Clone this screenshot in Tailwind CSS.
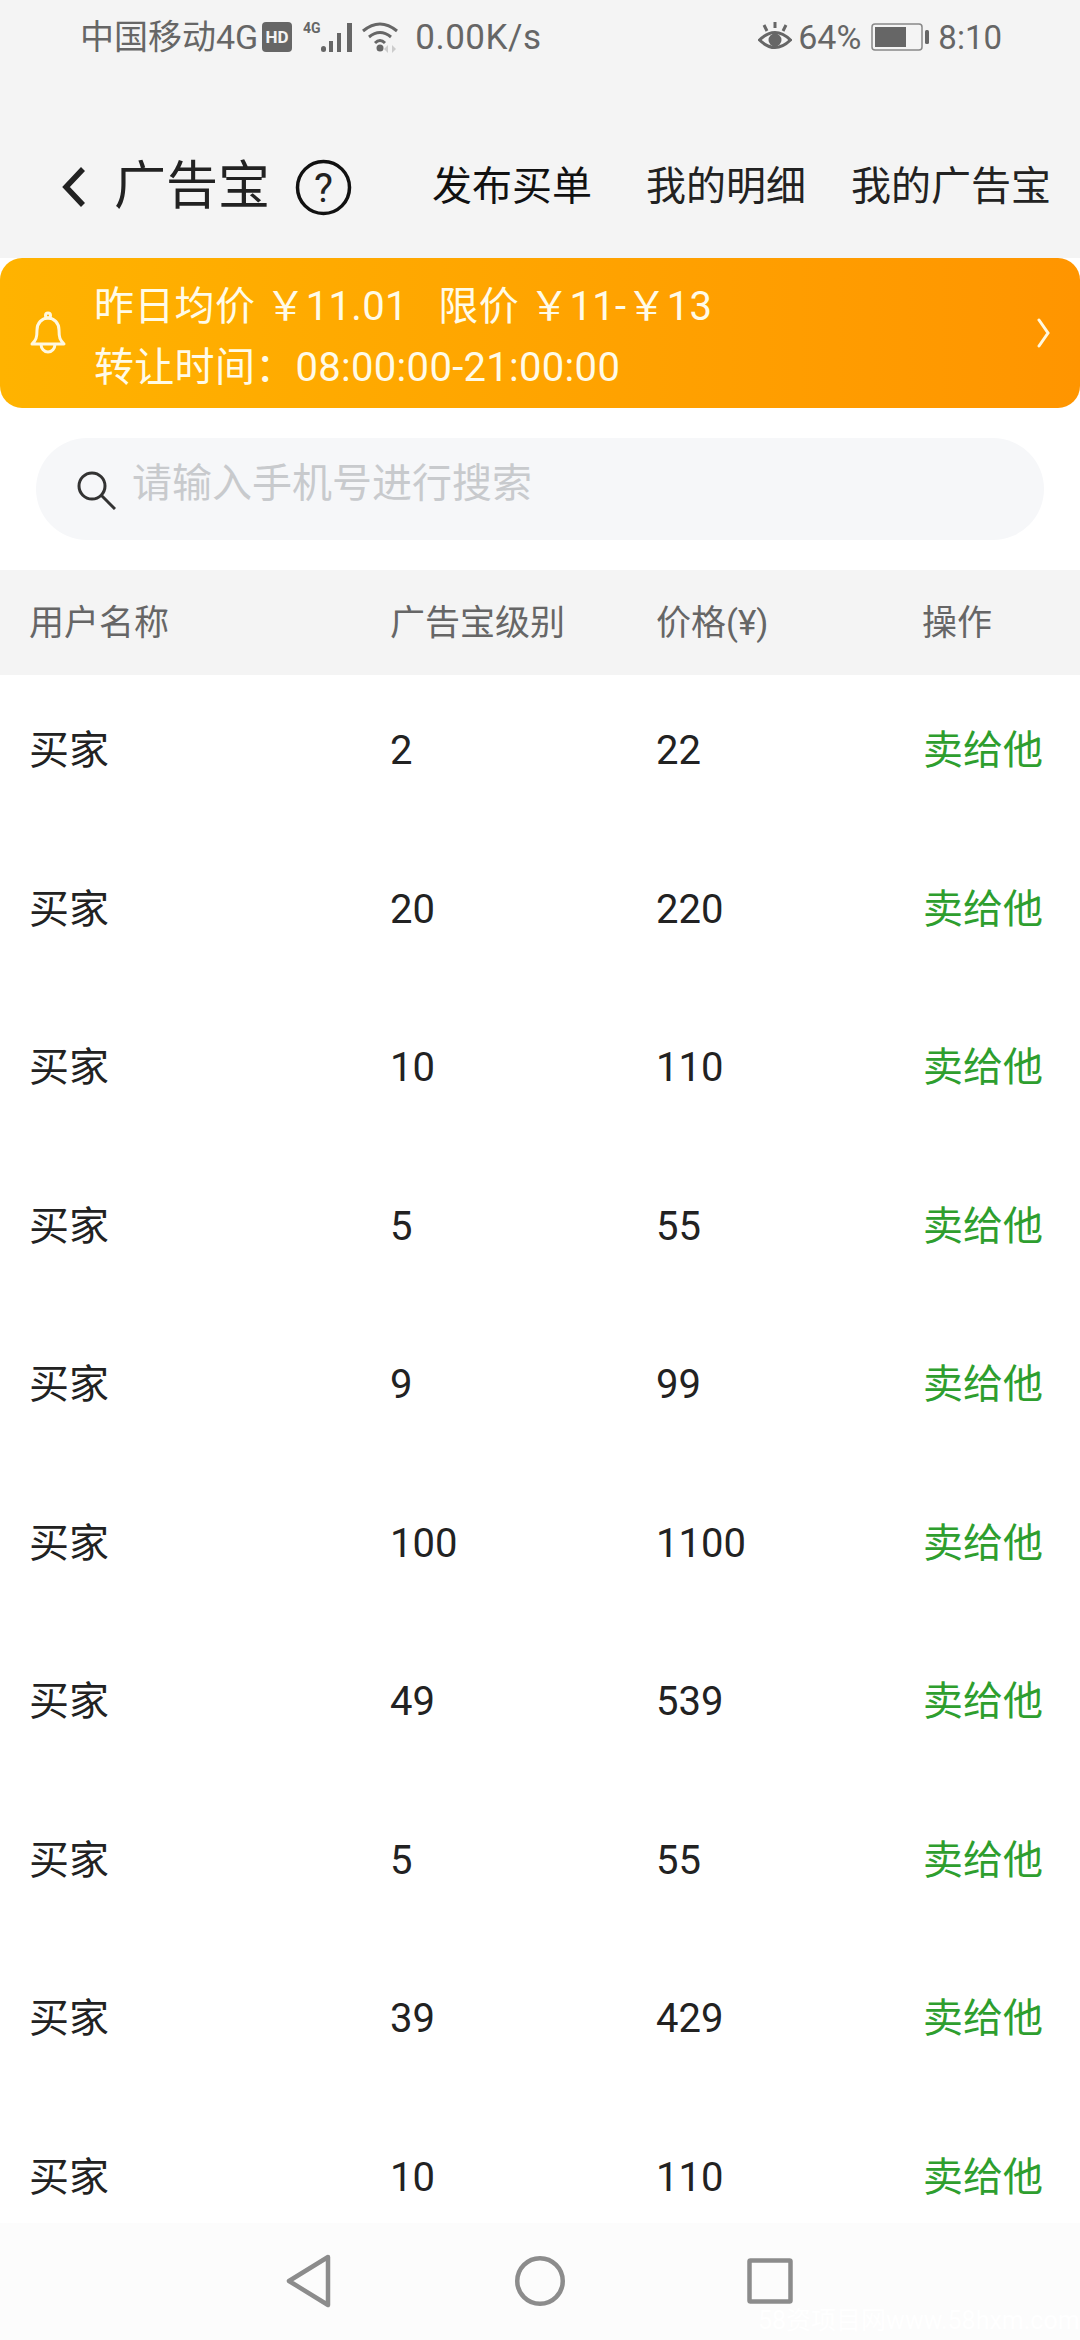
<!DOCTYPE html>
<html lang="zh"><head><meta charset="utf-8"><script src="https://cdn.jsdelivr.net/npm/@tailwindcss/browser@4"></script></head>
<body class="w-[1080px] h-[2340px] overflow-hidden bg-white font-['Roboto','Noto_Sans_CJK_SC',sans-serif] text-[#222]">
<div class="flex h-[2340px] flex-col">
  <div class="h-[258px] shrink-0 bg-[#f4f4f4]">
    <div class="flex h-[74px] items-center pl-[80px] pr-[78px] text-[34px] text-[#666]">
      <span class="leading-none">中国移动4G</span>
      <svg class="ml-[4px]" width="30" height="32" viewBox="0 0 30 32"><rect width="30" height="30" y="1" rx="4" fill="#666"/><text x="15" y="22" text-anchor="middle" font-family="Roboto" font-weight="700" font-size="17" fill="#f4f4f4">HD</text></svg>
      <svg class="ml-[11px]" width="50" height="34" viewBox="0 0 50 34"><text x="0" y="13" font-family="Roboto" font-weight="700" font-size="14" fill="#666">4G</text><rect x="18" y="26" width="5" height="6" rx="2.5" fill="#666"/><rect x="26" y="21" width="4" height="11" fill="#666"/><rect x="34" y="13" width="4" height="19" fill="#666"/><rect x="44" y="3" width="5" height="29" fill="#666"/></svg>
      <svg class="ml-[9px]" width="36" height="34" viewBox="0 0 36 34" fill="none" stroke="#666" stroke-width="3"><path d="M1 11Q18 -3 35 11"/><path d="M7 17Q18 8 29 17"/><path d="M13 23Q18 18 23 23"/><circle cx="18" cy="28" r="3.5" fill="#666" stroke="none"/><path d="M26 25l-4 4 4 4zM30 25l4 4-4 4z" fill="#ccc" stroke="none"/></svg>
      <span class="ml-[17px] text-[35px] leading-none tracking-[0.5px]">0.00K/s</span>
      <span class="flex-1"></span>
      <svg width="34" height="30" viewBox="0 0 34 30"><path d="M1.5 18Q17 3 32.5 18Q17 33 1.500 18Z" fill="none" stroke="#666" stroke-width="3"/><circle cx="17" cy="18" r="6.500" fill="#666"/><path d="M17 0v6M6 3l3 6M28 3l-3 6" stroke="#666" stroke-width="3"/></svg>
      <span class="ml-[6px] leading-none">64%</span>
      <svg class="ml-[10px]" width="58" height="28" viewBox="0 0 58 28"><rect x="1" y="1" width="50" height="26" rx="3" fill="none" stroke="#888" stroke-width="1.500"/><rect x="4" y="4" width="31" height="20" fill="#666"/><rect x="54" y="7" width="4" height="14" rx="1.500" fill="#666"/></svg>
      <span class="ml-[9px] text-[33px] leading-none">8:10</span>
    </div>
    <div class="flex h-[184px] items-center pt-[42px]">
      <svg class="ml-[62px]" width="24" height="44" viewBox="0 0 24 44" fill="none" stroke="#222" stroke-width="5.500"><path d="M21 4L4 22l17 18"/></svg>
      <span class="ml-[28px] text-[52px] leading-none">广告宝</span>
      <svg class="ml-[25px]" width="57" height="57" viewBox="0 0 57 57"><circle cx="28.500" cy="28.500" r="26" fill="none" stroke="#111" stroke-width="3.500"/><text x="28.500" y="43" text-anchor="middle" font-family="Roboto" font-weight="400" font-size="40" fill="#222">?</text></svg>
      <span class="ml-[80px] text-[40px] leading-none text-[#111]">发布买单</span>
      <span class="ml-[54px] text-[40px] leading-none">我的明细</span>
      <span class="ml-[45px] text-[40px] leading-none">我的广告宝</span>
    </div>
  </div>
  <div class="flex h-[150px] shrink-0 items-center rounded-[22px] bg-gradient-to-r from-[#ffb300] to-[#ff9500] text-[40px] tracking-[0.3px] text-[#fffbe8]">
    <svg class="ml-[29px]" width="38" height="44" viewBox="0 0 38 44" fill="none" stroke="#fff8e0" stroke-width="3" stroke-linejoin="round"><path d="M3 33c4-4 5-6 5-14 0-7 5-12 11-12s11 5 11 12c0 8 1 10 5 14z"/><circle cx="19" cy="4.500" r="2.500"/><path d="M12 33a7 8 0 0 0 14 0"/></svg>
    <div class="ml-[27px] mt-[9px] flex flex-col gap-[11px] leading-[50px]">
      <div class="h-[50px] whitespace-pre">昨日均价 ￥11.01   限价 ￥11-￥13</div>
      <div class="h-[50px]">转让时间：08:00:00-21:00:00</div>
    </div>
    <span class="flex-1"></span>
    <svg class="mr-[29px]" width="14" height="32" viewBox="0 0 14 32" fill="none" stroke="#fff8e0" stroke-width="3" stroke-linecap="round"><path d="M2 3l9 13-9 13"/></svg>
  </div>
  <div class="shrink-0 px-[36px] pt-[30px] pb-[30px]">
    <div class="flex h-[102px] items-center rounded-[51px] bg-[#f6f7f9]">
      <svg class="ml-[41px] mt-[2px]" width="39" height="39" viewBox="0 0 39 39" fill="none" stroke="#333" stroke-width="3"><circle cx="15" cy="15" r="13"/><path d="M24.500 24.500L38 38"/></svg>
      <span class="ml-[16px] -mt-[10px] text-[40px] leading-none text-[#c8cacd]">请输入手机号进行搜索</span>
    </div>
  </div>
  <div class="grid h-[105px] shrink-0 grid-cols-[389px_266px_266px_1fr] items-center bg-[#f4f4f4] pl-[1px] pt-[3px] text-[35px] text-[#666]">
    <span class="pl-[28px]">用户名称</span><span>广告宝级别</span><span>价格(¥)</span><span>操作</span>
  </div>
  <div class="-mt-[3px] flex-1 overflow-hidden text-[40px] text-[#222]">
    <div class="grid h-[158.5px] grid-cols-[389px_266px_267px_1fr] items-center pl-[1px]"><span class="pl-[28px]">买家</span><span>2</span><span>22</span><span class="text-[#2e9e2e]">卖给他</span></div>
    <div class="grid h-[158.5px] grid-cols-[389px_266px_267px_1fr] items-center pl-[1px]"><span class="pl-[28px]">买家</span><span>20</span><span>220</span><span class="text-[#2e9e2e]">卖给他</span></div>
    <div class="grid h-[158.5px] grid-cols-[389px_266px_267px_1fr] items-center pl-[1px]"><span class="pl-[28px]">买家</span><span>10</span><span>110</span><span class="text-[#2e9e2e]">卖给他</span></div>
    <div class="grid h-[158.5px] grid-cols-[389px_266px_267px_1fr] items-center pl-[1px]"><span class="pl-[28px]">买家</span><span>5</span><span>55</span><span class="text-[#2e9e2e]">卖给他</span></div>
    <div class="grid h-[158.5px] grid-cols-[389px_266px_267px_1fr] items-center pl-[1px]"><span class="pl-[28px]">买家</span><span>9</span><span>99</span><span class="text-[#2e9e2e]">卖给他</span></div>
    <div class="grid h-[158.5px] grid-cols-[389px_266px_267px_1fr] items-center pl-[1px]"><span class="pl-[28px]">买家</span><span>100</span><span>1100</span><span class="text-[#2e9e2e]">卖给他</span></div>
    <div class="grid h-[158.5px] grid-cols-[389px_266px_267px_1fr] items-center pl-[1px]"><span class="pl-[28px]">买家</span><span>49</span><span>539</span><span class="text-[#2e9e2e]">卖给他</span></div>
    <div class="grid h-[158.5px] grid-cols-[389px_266px_267px_1fr] items-center pl-[1px]"><span class="pl-[28px]">买家</span><span>5</span><span>55</span><span class="text-[#2e9e2e]">卖给他</span></div>
    <div class="grid h-[158.5px] grid-cols-[389px_266px_267px_1fr] items-center pl-[1px]"><span class="pl-[28px]">买家</span><span>39</span><span>429</span><span class="text-[#2e9e2e]">卖给他</span></div>
    <div class="grid h-[158.5px] grid-cols-[389px_266px_267px_1fr] items-center pl-[1px]"><span class="pl-[28px]">买家</span><span>10</span><span>110</span><span class="text-[#2e9e2e]">卖给他</span></div>
  </div>
  <div class="relative flex h-[117px] shrink-0 items-start overflow-hidden bg-[#fcfcfc]">
    <svg class="ml-[286px] mt-[31px]" width="46" height="54" viewBox="0 0 46 54" fill="none" stroke="#8c8c8c" stroke-width="4.500" stroke-linejoin="round"><path d="M42 3L3 27l39 24z"/></svg>
    <svg class="ml-[183px] mt-[33px]" width="50" height="50" viewBox="0 0 50 50" fill="none" stroke="#8c8c8c" stroke-width="4.500"><circle cx="25" cy="25" r="22.750"/></svg>
    <svg class="ml-[182px] mt-[35px]" width="46" height="46" viewBox="0 0 46 46" fill="none" stroke="#8c8c8c" stroke-width="4.500" stroke-linejoin="round"><rect x="2.500" y="2.500" width="41" height="41" rx="1"/></svg>
    <span class="absolute left-[758px] top-[84px] whitespace-nowrap text-[25px] leading-[28px] text-white">58资项目网www.58hxm.com</span>
  </div>
</div>
</body></html>
